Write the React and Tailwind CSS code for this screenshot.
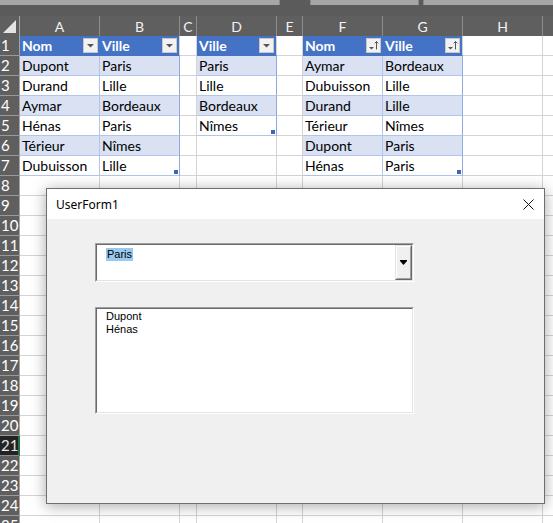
import React from 'react';

const COLS = [
  { key: 'A', w: 'w-[80px]' },
  { key: 'B', w: 'w-[80px]' },
  { key: 'C', w: 'w-[17px]' },
  { key: 'D', w: 'w-[80px]' },
  { key: 'E', w: 'w-[26px]' },
  { key: 'F', w: 'w-[80px]' },
  { key: 'G', w: 'w-[80px]' },
  { key: 'H', w: 'w-[80px]' },
  { key: '', w: 'w-[80px]' },
];

const tables = [
  {
    cols: ['A', 'B'],
    header: ['Nom', 'Ville'],
    sorted: false,
    rows: [
      ['Dupont', 'Paris'],
      ['Durand', 'Lille'],
      ['Aymar', 'Bordeaux'],
      ['Hénas', 'Paris'],
      ['Térieur', 'Nîmes'],
      ['Dubuisson', 'Lille'],
    ],
  },
  {
    cols: ['D'],
    header: ['Ville'],
    sorted: false,
    rows: [['Paris'], ['Lille'], ['Bordeaux'], ['Nîmes']],
  },
  {
    cols: ['F', 'G'],
    header: ['Nom', 'Ville'],
    sorted: true,
    rows: [
      ['Aymar', 'Bordeaux'],
      ['Dubuisson', 'Lille'],
      ['Durand', 'Lille'],
      ['Térieur', 'Nîmes'],
      ['Dupont', 'Paris'],
      ['Hénas', 'Paris'],
    ],
  },
];

const getCell = (row, col) => {
  for (const t of tables) {
    const ci = t.cols.indexOf(col);
    if (ci === -1) continue;
    const last = ci === t.cols.length - 1;
    if (row === 1) return { kind: 'head', text: t.header[ci], last, sorted: t.sorted };
    const r = t.rows[row - 2];
    if (r) return { kind: 'body', text: r[ci], last, band: row % 2 === 0, end: row - 1 === t.rows.length && last };
  }
  return null;
};

const FilterButton = ({ sorted }) => (
  <div className="w-[15px] h-[15px] mr-[2px] bg-[#f2f2f2] border border-[#c8c8c8] flex items-center justify-center">
    {sorted ? (
      <svg width="13" height="13" viewBox="0 0 13 13">
        <path d="M2 8h5l-2.5 2.5z" fill="#555" />
        <path d="M9.5 2.5v8M7.8 4.3l1.7-1.8 1.7 1.8" stroke="#555" strokeWidth="1" fill="none" />
      </svg>
    ) : (
      <svg width="9" height="6" viewBox="0 0 9 6">
        <path d="M1 1h7l-3.5 3.5z" fill="#555" />
      </svg>
    )}
  </div>
);

const Cell = ({ row, col }) => {
  const c = getCell(row, col.key);
  if (!c) {
    return <div className={`${col.w} shrink-0 h-full border-r border-b border-[#d4d4d4]`} />;
  }
  if (c.kind === 'head') {
    return (
      <div className={`${col.w} shrink-0 h-full bg-[#4472c4] flex items-center justify-between pl-[2px] border-b border-[#4472c4] ${c.last ? 'border-r border-r-[#d4d4d4]' : ''}`}>
        <span className="text-white font-bold">{c.text}</span>
        <FilterButton sorted={c.sorted} />
      </div>
    );
  }
  return (
    <div
      className={`${col.w} shrink-0 h-full relative flex items-center pl-[2px] border-b border-r ${c.band ? 'bg-[#d9e1f2]' : 'bg-white'} ${c.last ? 'border-r-[#8ea9db]' : 'border-r-[#b4c6e7]'} border-b-[#b4c6e7]`}
    >
      <span className="text-black">{c.text}</span>
      {c.end && <div className="absolute right-[1px] bottom-[1px] w-[4px] h-[4px] bg-[#3f65b4]" />}
    </div>
  );
};

const Grid = () => {
  const rows = Array.from({ length: 25 }, (_, i) => i + 1);
  return (
    <div className="flex flex-col">
      {/* column headers */}
      <div className="flex h-[20px] bg-[#5f5f5f]">
        <div className="w-[20px] shrink-0 h-full border-r border-[#a3a3a3] relative flex items-end justify-end pr-[3px] pb-[3px]">
          <svg width="13" height="13" viewBox="0 0 13 13">
            <path d="M13 0V13H0z" fill="#e4e4e4" />
          </svg>
        </div>
        {COLS.map((col, i) => (
          <div key={i} className={`${col.w} shrink-0 h-full border-r border-[#8c8c8c] flex items-center justify-center text-[#f2f2f2] text-[14px]`}>
            {col.key}
          </div>
        ))}
      </div>
      {rows.map((r) => (
        <div key={r} className="flex h-[20px]">
          <div
            className={`w-[20px] shrink-0 h-full flex items-center pl-[1px] border-b text-[15px] ${
              r === 21
                ? 'bg-[#232323] text-[#e6e6e6] border-b-[#8c8c8c] border-r-2 border-r-[#217346]'
                : 'bg-[#5f5f5f] text-white border-b-[#9a9a9a] border-r border-r-[#a3a3a3]'
            }`}
          >
            {r}
          </div>
          {COLS.map((col, i) => (
            <Cell key={i} row={r} col={col} />
          ))}
        </div>
      ))}
    </div>
  );
};

const UserForm = () => (
  <div
    className="absolute left-[46px] top-[188px] w-[499px] h-[316px] border border-[#6e6e6e] bg-[#f0f0f0] shadow-[0_2px_14px_rgba(0,0,0,0.35)] flex flex-col text-[11px] leading-[13px]"
    style={{ fontFamily: '"Liberation Sans", Arial, sans-serif' }}
  >
    <div className="h-[30px] bg-white flex items-center justify-between pl-[9px] pr-[10px]">
      <span className="text-[12px] text-black" style={{ fontFamily: '"Noto Sans", sans-serif' }}>UserForm1</span>
      <svg width="11" height="11" viewBox="0 0 11 11">
        <path d="M0.5 0.5l10 10M10.5 0.5l-10 10" stroke="#111" strokeWidth="1" />
      </svg>
    </div>
    <div className="flex flex-col pl-[48px] pt-[24px]">
      {/* combobox */}
      <div className="w-[319px] h-[39px] border border-t-[#a0a0a0] border-l-[#a0a0a0] border-b-white border-r-white">
        <div className="h-full border border-t-[#696969] border-l-[#696969] border-b-[#e3e3e3] border-r-[#e3e3e3] bg-white flex">
          <div className="flex-1 pl-[9px] pt-[3px]">
            <span className="bg-[#99c9ef] text-black inline-block px-[1px]">Paris</span>
          </div>
          <div className="w-[17px] h-full border border-t-[#e3e3e3] border-l-[#e3e3e3] border-b-[#696969] border-r-[#696969]">
            <div className="h-full border border-t-white border-l-white border-b-[#a0a0a0] border-r-[#a0a0a0] bg-[#f0f0f0] flex items-center justify-center">
              <svg width="7" height="5" viewBox="0 0 7 5">
                <path d="M0 0h7v1l-3.5 4L0 1z" fill="#000" />
              </svg>
            </div>
          </div>
        </div>
      </div>
      {/* listbox */}
      <div className="mt-[25px] w-[319px] h-[107px] border border-t-[#a0a0a0] border-l-[#a0a0a0] border-b-white border-r-white">
        <div className="h-full border border-t-[#696969] border-l-[#696969] border-b-[#e3e3e3] border-r-[#e3e3e3] bg-white pl-[9px] pt-[1px] text-black">
          <div>Dupont</div>
          <div>Hénas</div>
        </div>
      </div>
    </div>
  </div>
);

export default function App() {
  return (
    <div
      className="relative w-[553px] h-[523px] overflow-hidden bg-white"
      style={{ fontFamily: 'Lato, "Liberation Sans", sans-serif', fontSize: '14px' }}
    >
      <div className="flex h-[5px] bg-[#5b5b5b]">
        <div className="w-[280px] bg-[#a6a6a6] border-r border-[#8a8a8a]" />
        <div className="w-[30px]" />
        <div className="w-[109px] bg-[#a6a6a6] border-x border-[#8a8a8a]" />
        <div className="w-[4px]" />
        <div className="flex-1 bg-[#a6a6a6] border-l border-[#8a8a8a]" />
      </div>
      <div className="h-[11px] bg-[#5b5b5b]" />
      <Grid />
      <UserForm />
    </div>
  );
}
